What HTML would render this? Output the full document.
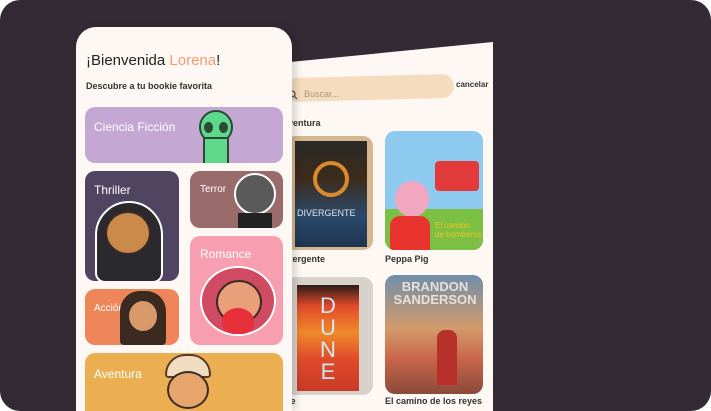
<!DOCTYPE html>
<html><head><meta charset="utf-8"><style>
*{margin:0;padding:0;box-sizing:border-box}
html,body{width:711px;height:411px;overflow:hidden;background:#fff;font-family:"Liberation Sans","DejaVu Sans",sans-serif;position:relative}
.bg{position:absolute;left:0;top:0;width:711px;height:411px;background:#342a35;border-radius:20px}
.back{position:absolute;left:0;top:0;width:711px;height:411px;background:#fdf8f4;clip-path:polygon(280px 63px,493px 42px,493px 411px,280px 411px)}
.abs{position:absolute}
.search{left:285px;top:76px;width:169px;height:24px;background:#f6dcbf;border-radius:12px;transform:rotate(-1.5deg)}
.book{position:absolute;border-radius:10px;overflow:hidden}
.lbl{position:absolute;font-size:9px;font-weight:bold;color:#333}
.card{position:absolute;left:76px;top:27px;width:216px;height:384px;background:#fdf8f4;border-radius:20px 20px 0 0;box-shadow:4px 0 8px rgba(0,0,0,.15)}
.cat{position:absolute;border-radius:10px;overflow:hidden;color:#fff}
.cat span{position:absolute;font-size:12px}
.face{position:absolute;border-radius:50%;border:2px solid #3a2a25}
</style></head><body>
<div class="bg"></div>
<div class="back"></div>
<div class="abs search"></div>
<svg class="abs" style="left:288px;top:90px" width="10" height="10"><circle cx="4" cy="4" r="3" fill="none" stroke="#555" stroke-width="1.3"/><line x1="6" y1="6" x2="9" y2="9" stroke="#555" stroke-width="1.3"/></svg>
<div class="abs" style="left:304px;top:89px;font-size:9px;color:#a89880">Buscar...</div>
<div class="abs" style="left:456px;top:80px;font-size:8px;font-weight:bold;color:#333">cancelar</div>
<div class="abs" style="left:283px;top:118px;font-size:9px;font-weight:bold;color:#333">aventura</div>
<div class="book" style="left:285px;top:136px;width:88px;height:114px;background:#d6b88f"><div class="abs" style="left:10px;top:5px;width:72px;height:106px;background:linear-gradient(#2a2a28 0%,#3d2b1a 35%,#2c4a6b 70%,#1e3550 100%)"><div class="abs" style="left:18px;top:20px;width:36px;height:36px;border-radius:50%;border:4px solid #d98a2b"></div><div class="abs" style="left:2px;top:67px;font-size:9px;color:#dfe3e8">DIVERGENTE</div></div></div>
<div class="book" style="left:385px;top:131px;width:98px;height:119px;background:#8ecaf0"><div class="abs" style="left:0;top:78px;width:98px;height:41px;background:#7bc043"></div><div class="abs" style="left:50px;top:30px;width:44px;height:30px;background:#e23a3a;border-radius:4px"></div><div class="abs" style="left:10px;top:50px;width:34px;height:36px;background:#f3a6c0;border-radius:50%"></div><div class="abs" style="left:5px;top:85px;width:40px;height:34px;background:#e8332e;border-radius:10px 10px 0 0"></div><div class="abs" style="left:50px;top:90px;font-size:8px;color:#f4c21f">El camión<br>de bomberos</div></div>
<div class="lbl" style="left:285px;top:254px">ivergente</div>
<div class="lbl" style="left:385px;top:254px">Peppa Pig</div>
<div class="book" style="left:285px;top:277px;width:88px;height:118px;background:#d8d2cc"><div class="abs" style="left:12px;top:8px;width:62px;height:106px;background:linear-gradient(#2b1d18 0%,#e24a2a 20%,#f08a2a 45%,#e04a2a 70%,#c93a26 100%)"><div class="abs" style="left:20px;top:10px;font-size:22px;color:#d0e6f0;line-height:22px;width:22px;text-align:center">D<br>U<br>N<br>E</div></div></div>
<div class="book" style="left:385px;top:275px;width:98px;height:119px;background:linear-gradient(#6f8eab 0%,#d39a6a 45%,#c9674a 70%,#8a4a3a 100%)"><div class="abs" style="left:5px;top:5px;width:90px;font-size:13px;color:#e8e0d8;line-height:13px;text-align:center;font-weight:bold">BRANDON<br>SANDERSON</div><div class="abs" style="left:52px;top:55px;width:20px;height:55px;background:#b8302a;border-radius:8px 8px 0 0"></div></div>
<div class="lbl" style="left:285px;top:396px">ne</div>
<div class="lbl" style="left:385px;top:396px">El camino de los reyes</div>

<div class="card">
<div class="abs" style="left:10px;top:25px;font-size:15px;color:#222">¡Bienvenida <span style="color:#f79a6f">Lorena</span>!</div>
<div class="abs" style="left:10px;top:54px;font-size:9px;font-weight:bold;color:#333">Descubre a tu bookie favorita</div>
</div>
<div class="cat" style="left:85px;top:107px;width:198px;height:56px;background:#c4a8d3"><span style="left:9px;top:13px">Ciencia Ficción</span>
<div class="abs" style="left:114px;top:3px;width:34px;height:34px;border-radius:50%;background:#5ed88a;border:2px solid #2a4a33"></div>
<div class="abs" style="left:118px;top:30px;width:26px;height:30px;background:#5ed88a;border:2px solid #2a4a33"></div>
<div class="abs" style="left:119px;top:15px;width:9px;height:11px;border-radius:50%;background:#2a4a33"></div><div class="abs" style="left:134px;top:15px;width:9px;height:11px;border-radius:50%;background:#2a4a33"></div></div>
<div class="cat" style="left:85px;top:171px;width:94px;height:110px;background:#4f4560"><span style="left:9px;top:12px">Thriller</span>
<div class="abs" style="left:10px;top:30px;width:68px;height:82px;border-radius:34px 34px 10px 10px;background:#2a2a2e;border:2px solid #fff"></div>
<div class="face" style="left:20px;top:40px;width:46px;height:44px;background:#c98a4a"></div></div>
<div class="cat" style="left:190px;top:171px;width:93px;height:57px;background:#9a6b6b"><span style="left:10px;top:13px;font-size:10px">Terror</span>
<div class="face" style="left:44px;top:2px;width:42px;height:42px;background:#5a5a5a;border-color:#fff"></div><div class="abs" style="left:48px;top:42px;width:34px;height:20px;background:#222"></div></div>
<div class="cat" style="left:190px;top:236px;width:93px;height:109px;background:#f79fb1"><span style="left:10px;top:11px">Romance</span>
<div class="face" style="left:10px;top:30px;width:76px;height:70px;background:#d04a62;border-color:#fff"></div><div class="face" style="left:26px;top:44px;width:46px;height:44px;background:#e9a07a"></div><div class="abs" style="left:32px;top:72px;width:32px;height:26px;background:#e8303a;border-radius:50% 50% 40% 40%"></div></div>
<div class="cat" style="left:85px;top:289px;width:94px;height:56px;background:#ef865a"><span style="left:9px;top:14px;font-size:10px">Acción</span>
<div class="abs" style="left:35px;top:2px;width:46px;height:54px;border-radius:20px 20px 4px 4px;background:#3a2a20"></div><div class="face" style="left:42px;top:10px;width:32px;height:34px;background:#d99a6a"></div></div>
<div class="cat" style="left:85px;top:353px;width:198px;height:58px;background:#ebaf52;border-radius:10px 10px 0 0"><span style="left:9px;top:14px">Aventura</span>
<div class="abs" style="left:80px;top:1px;width:46px;height:24px;border-radius:23px 23px 4px 4px;background:#f0dcc0;border:2px solid #5a3a2a"></div><div class="face" style="left:82px;top:18px;width:42px;height:38px;background:#e6a56a"></div></div>
</body></html>
